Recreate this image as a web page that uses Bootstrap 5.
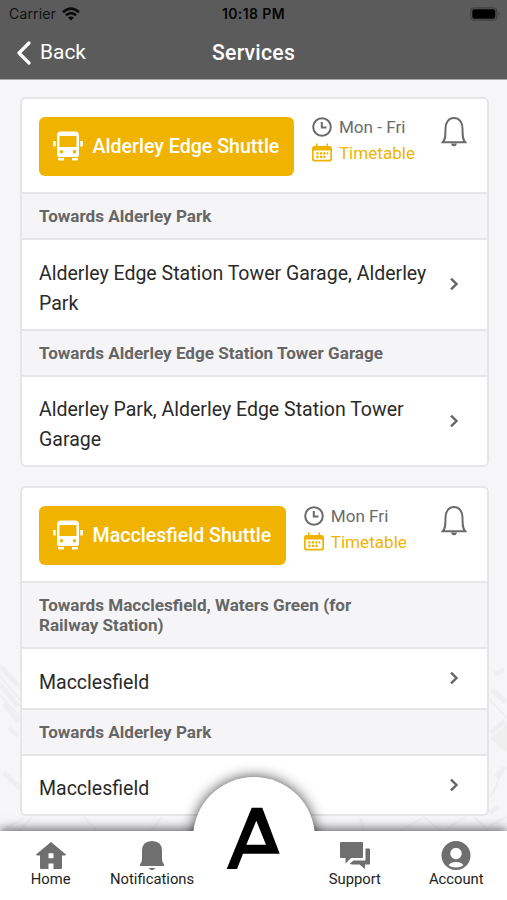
<!DOCTYPE html>
<html lang="en">
<head>
<meta charset="utf-8">
<meta name="viewport" content="width=device-width, initial-scale=1">
<title>Services</title>
<link href="https://cdn.jsdelivr.net/npm/bootstrap@5.3.0/dist/css/bootstrap.min.css" rel="stylesheet">
<style>
body{font-family:Roboto,"Liberation Sans",sans-serif;background:#f6f6f9;color:#2a2a2a}
.screen{width:507px;height:900px;background:#f6f6f9}
.topbar{height:80px;background:#5b5b5b;border-bottom:1px solid #a9a9ab}
.statusbar{height:27px;font-family:Inter,"Liberation Sans",sans-serif;font-size:14px;letter-spacing:.15px;color:#111;padding:0 6px 0 9px}
.statusbar .time{font-weight:600;font-size:14px;letter-spacing:.4px;color:#050505}
.wifi{margin-left:6px}
.titlebar{height:51px;color:#fff;padding:0 16px}
.back-label{font-size:20.9px;margin-left:9px;margin-top:1px}
.page-title{font-size:21.2px;font-weight:500;letter-spacing:.25px}
.map-bg{inset:560px 0 0 0}
.services{padding:17px 18.5px 0 19.5px;gap:19px}
.service-card{border:2px solid #e6e6e8;border-radius:6px;--bs-card-bg:#fff;overflow:hidden}
.service-head{height:93px;padding:18px 17.5px 0}
.service-pill{height:58.5px;background:#f0b400;border-radius:6px;color:#fff;font-size:19.6px;font-weight:500;padding:0 14.5px 0 14px;gap:9.5px}
.service-meta{font-size:17.1px;line-height:26.4px;color:#6b6b6b;margin-left:18px;margin-top:-3.500px}
.service-meta .tt{color:#f0b400}
.service-meta svg{margin-right:7px}
.bell-toggle{margin-top:-1px;margin-right:2px}
.direction{background:#f5f5f7;border-top:2px solid #e6e6e8;border-bottom:2px solid #e6e6e8;color:#666;font-size:17.1px;line-height:20px;font-weight:700;padding:12px 110px 12px 17.5px}
.stop-row{font-size:19.52px;line-height:30px;padding:18.5px 28px 10px 17.5px}
.stop-row svg{margin-top:-9px}
.tabbar{height:69px;background:#fff;box-shadow:0 -2px 10px rgba(0,0,0,.6)}
.hub{left:193px;top:777px;width:122px;height:122px}
.hub-shadow{border-radius:50%;background:#fff;box-shadow:0 0 14px rgba(0,0,0,.75)}
.tabs{height:69px;background:#fff;font-size:14.8px;line-height:18px;color:#222;padding-top:9px}
.tab-item{width:101.4px}
</style>
</head>
<body>
<svg class="d-none">
  <symbol id="bus" viewBox="0 0 30 30"><path fill="#fff" fill-rule="evenodd" d="M8 .5h14q4 0 4 4V24q0 2-2 2H6q-2 0-2-2V4.500q0-4 4-4zM6.500 5v11h17V5zM8.500 19a1.700 1.700 0 1 0 .01 0zM21.500 19a1.700 1.700 0 1 0 .01 0z"/><path fill="#fff" d="M0 10h2.700v5.500H1.500Q0 15.500 0 14zM27.300 10H30v4q0 1.500-1.500 1.500h-1.200zM5 27h6v2.500H6.500Q5 29.500 5 28zM19 27h6v1q0 1.500-1.500 1.500H19z"/></symbol>
  <symbol id="clock" viewBox="0 0 20 20"><circle cx="10" cy="10" r="8.800" fill="none" stroke="#6b6b6b" stroke-width="2"/><path d="M9.800 5v5.500h4.700" fill="none" stroke="#6b6b6b" stroke-width="2"/></symbol>
  <symbol id="cal" viewBox="0 0 20 20"><path fill="#f0b400" fill-rule="evenodd" d="M4 .5h1.600V3h8.800V.5H16V3h1.500Q20 3 20 5.500V16q0 2.500-2.500 2.500h-15Q0 18.500 0 16V5.500Q0 3 2.500 3H4zM1.700 7.500v8q0 1.300 1.300 1.300h14q1.300 0 1.300-1.300v-8z"/><path fill="#f0b400" d="M8 9.200h2.300v2.200H8zM11.300 9.200h2.300v2.200h-2.300zM14.600 9.200h1.700v2.200h-1.700zM4.300 12.800h2.300V15H4.300zM8 12.800h2.300V15H8zM11.300 12.800h2.300V15h-2.300zM4.300 9.200h2.300v2.200H4.300z"/></symbol>
  <symbol id="bell" viewBox="0 0 26 31"><path d="M1.800 26.200C4.700 23 4.300 20 4.500 12.500 4.500 6 8 2 13 2s8.500 4 8.500 10.500c.2 7.500-.2 10.500 2.700 13.700z" fill="none" stroke="#6b6b6b" stroke-width="2"/><path d="M9.800 27.500h6.400q-1 2.800-3.200 2.800t-3.200-2.800z" fill="#6b6b6b"/></symbol>
  <symbol id="chev" viewBox="0 0 10 14"><path d="M2 1.700 7.500 7 2 12.300" fill="none" stroke="#666" stroke-width="2.400"/></symbol>
</svg>
<div class="screen position-relative overflow-hidden d-flex flex-column">
  <svg class="map-bg position-absolute" width="507" height="272" viewBox="0 560 507 272" fill="none" stroke="#efeff1">
    <g stroke-width="5"><path d="M2 668l16 17M0 684l18 22M4 704l15 18M9 728l9 8M4 773l16 15M494 674l10-4M492 690l14 12M491 733l14-12M496 777l8-9M490 813l9-7"/></g>
    <path d="M490 738l17-14v28l-8-5z" fill="#efeff0" stroke="none"/>
    <g stroke-width="2"><path d="M0 665l20 23M0 676l20 24M0 695l20 22M490 796c8-5 5-20 17-29M490 700l17 18M0 832l24-14M84 817l14 15M150 832l12-15M20 830l12-13M360 817l4 15M398 832l26-15 18 15M447 829l18-12M490 825l17-8M474 817l15 14"/></g>
  </svg>
  <header class="topbar flex-shrink-0">
    <div class="statusbar d-flex align-items-center position-relative">
      <span>Carrier</span>
      <svg class="wifi" width="18" height="14" viewBox="0 0 18 14" fill="none" stroke="#0b0b0b" stroke-width="2.600"><path d="M1 5.200q8-7.200 16 0M3.900 8.300q5.100-4.500 10.200 0"/><path d="M9 13.500 6 10.600q3-2.400 6 0z" fill="#0b0b0b" stroke="none"/></svg>
      <span class="time position-absolute start-50 translate-middle-x text-nowrap">10:18 PM</span>
      <svg class="ms-auto" width="31" height="14" viewBox="0 0 31 14"><rect x=".8" y=".8" width="26" height="12.400" rx="3.500" fill="none" stroke="#404040" stroke-width="1.200"/><rect x="2.300" y="2.300" width="23" height="9.400" rx="2" fill="#000"/><path d="M28.500 5q2 2 0 4z" fill="#404040"/></svg>
    </div>
    <div class="titlebar d-flex align-items-center position-relative">
      <svg width="15" height="24" viewBox="0 0 15 24"><path d="M13 2 3 12l10 10" fill="none" stroke="#fff" stroke-width="3.200" stroke-linecap="round" stroke-linejoin="round"/></svg>
      <span class="back-label">Back</span>
      <span class="page-title position-absolute start-50 translate-middle-x">Services</span>
    </div>
  </header>
  <main class="services d-flex flex-column flex-grow-1 position-relative">
    <section class="card service-card">
      <div class="service-head d-flex align-items-start">
        <div class="service-pill d-flex align-items-center"><svg width="30" height="30"><use href="#bus"/></svg><span>Alderley Edge Shuttle</span></div>
        <div class="service-meta">
          <div class="d-flex align-items-center"><svg width="20" height="20"><use href="#clock"/></svg>Mon - Fri</div>
          <div class="tt d-flex align-items-center"><svg width="20" height="20"><use href="#cal"/></svg>Timetable</div>
        </div>
        <svg class="bell-toggle ms-auto" width="26" height="31"><use href="#bell"/></svg>
      </div>
      <div class="direction">Towards Alderley Park</div>
      <div class="stop-row d-flex align-items-center justify-content-between"><span>Alderley Edge Station Tower Garage, Alderley<br>Park</span><svg width="10" height="14"><use href="#chev"/></svg></div>
      <div class="direction pe-0">Towards Alderley Edge Station Tower Garage</div>
      <div class="stop-row d-flex align-items-center justify-content-between"><span>Alderley Park, Alderley Edge Station Tower<br>Garage</span><svg width="10" height="14"><use href="#chev"/></svg></div>
    </section>
    <section class="card service-card">
      <div class="service-head d-flex align-items-start">
        <div class="service-pill d-flex align-items-center"><svg width="30" height="30"><use href="#bus"/></svg><span>Macclesfield Shuttle</span></div>
        <div class="service-meta">
          <div class="d-flex align-items-center"><svg width="20" height="20"><use href="#clock"/></svg>Mon Fri</div>
          <div class="tt d-flex align-items-center"><svg width="20" height="20"><use href="#cal"/></svg>Timetable</div>
        </div>
        <svg class="bell-toggle ms-auto" width="26" height="31"><use href="#bell"/></svg>
      </div>
      <div class="direction">Towards Macclesfield, Waters Green (for Railway Station)</div>
      <div class="stop-row d-flex align-items-center justify-content-between"><span>Macclesfield</span><svg width="10" height="14"><use href="#chev"/></svg></div>
      <div class="direction">Towards Alderley Park</div>
      <div class="stop-row d-flex align-items-center justify-content-between"><span>Macclesfield</span><svg width="10" height="14"><use href="#chev"/></svg></div>
    </section>
  </main>
  <footer class="tabbar position-absolute bottom-0 start-0 w-100"></footer>
  <div class="hub hub-shadow position-absolute"></div>
  <nav class="tabs position-absolute bottom-0 start-0 w-100 d-flex text-center">
    <div class="tab-item d-flex flex-column align-items-center">
      <svg width="30" height="30" viewBox="0 0 30 30"><path fill="#6f6f6f" fill-rule="evenodd" d="M15 2 30 14.500l-1 1h-3V28q0 1-1 1h-7.500v-5.500h-5V29H5q-1 0-1-1V15.500H1l-1-1zM12.500 13.300v5h5v-5z"/></svg>
      <span>Home</span></div>
    <div class="tab-item d-flex flex-column align-items-center">
      <svg width="26" height="30" viewBox="0 0 26 30"><path fill="#6f6f6f" d="M3 11Q3 1 13 1t10 10v8q0 3 2 5.500v1.500H1v-1.500Q3 22 3 19zM9.500 28h7q-1.200 2-3.500 2t-3.500-2z"/></svg>
      <span>Notifications</span></div>
    <div class="tab-item"></div>
    <div class="tab-item d-flex flex-column align-items-center">
      <svg width="30" height="30" viewBox="0 0 30 30"><path fill="#6f6f6f" d="M1 2h21q1 0 1 1v14q0 1-1 1H11l-5.500 5.500V18H1q-1 0-1-1V3q0-1 1-1zM25.500 8.500H29q1 0 1 1v14q0 1-1 1h-4V29l-5.500-4.500h-7L9.500 24l4-3.500h11q1 0 1-1z"/></svg>
      <span>Support</span></div>
    <div class="tab-item d-flex flex-column align-items-center">
      <svg width="30" height="30" viewBox="0 0 30 30"><circle cx="15" cy="15.500" r="14.500" fill="#6f6f6f"/><circle cx="15" cy="13.500" r="5.700" fill="#fff"/><path fill="#fff" d="M7.500 25.200q2.500-3.200 7.500-3.200t7.500 3.200Q19.500 27.500 15 27.500T7.500 25.200z"/></svg>
      <span>Account</span></div>
  </nav>
  <svg class="hub position-absolute" viewBox="193 777 122 122"><circle cx="254" cy="838" r="60.500" fill="#fff" clip-path="inset(0 0 50px 0)"/><path fill-rule="evenodd" d="M251.700 807.700h10.600l17.400 46H243l-6 15.300h-10.300zM256.300 820.700l-10 24H266z"/></svg>
</div>
<script src="https://cdn.jsdelivr.net/npm/bootstrap@5.3.0/dist/js/bootstrap.bundle.min.js"></script>
</body>
</html>
